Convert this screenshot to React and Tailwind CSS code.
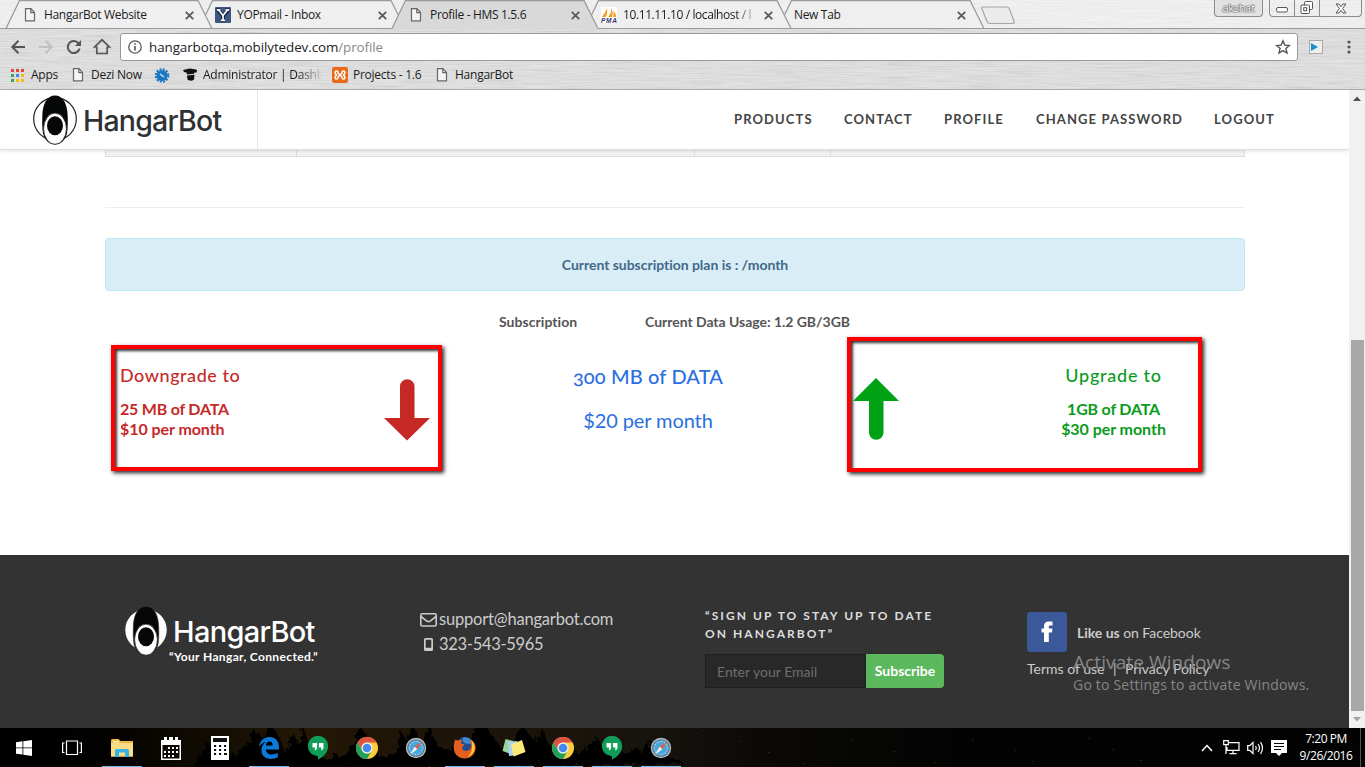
import React from "react";

const ui = "font-['Open_Sans','Noto_Sans',sans-serif]";

/* ---------- small drawings ---------- */

function Metal({ id, base, seed }) {
  return (
    <svg className="absolute inset-0 h-full w-full" aria-hidden="true">
      <filter id={id} x="0" y="0" width="100%" height="100%">
        <feTurbulence type="fractalNoise" baseFrequency="0.025 0.8" numOctaves="3" seed={seed} />
        <feColorMatrix values="1.4 0 0 0 0.05  1.4 0 0 0 0.05  1.4 0 0 0 0.05  0 0 0 0 0.16" />
      </filter>
      <rect width="100%" height="100%" fill={base} />
      <rect width="100%" height="100%" filter={`url(#${id})`} />
    </svg>
  );
}

function PageIcon() {
  return (
    <svg width="12" height="16" viewBox="0 0 12 16" fill="#f4f4f4" stroke="#666" strokeWidth="1.2" className="shrink-0">
      <path d="M1.5 1.6h5.4l3.6 3.9v8.4h-9z" />
      <path d="M6.8 1.6v4h3.7" fill="none" />
    </svg>
  );
}

function YopIcon() {
  return (
    <svg width="16" height="16" viewBox="0 0 16 16" className="shrink-0">
      <rect width="16" height="16" rx="1" fill="#3f5680" />
      <path d="M3 3l5 6 5-6M8 9v5M1.8 3h3.5M10.5 3H14M6 13.5h4" stroke="#111c38" strokeWidth="3.6" fill="none" />
      <path d="M3.600 3L8 8.600 12.400 3M8 8v5.500M2 2.800h3.400M10.600 2.800H14M6 13.300h4" stroke="#fff" strokeWidth="1.7" fill="none" />
    </svg>
  );
}

function PmaIcon() {
  return (
    <svg width="16" height="16" viewBox="0 0 16 16" className="shrink-0">
      <rect width="16" height="16" fill="#fff" />
      <path d="M6 1C5 4 3 7 1 10h4C6 7 6.500 4 6 1zM10 1c.8 4-1 7-3 9h4c1-3 .8-6-1-9zM12 4c1 2 .8 4 0 6h3c0-3-1-5-3-6z" fill="#f79a1c" />
      <text x="0" y="16" fontSize="6.500" fontWeight="bold" fontStyle="italic" fontFamily="Liberation Sans, sans-serif" fill="#33336e" textLength="16">PMA</text>
    </svg>
  );
}

function Tab({ icon, title, active, z, fade }) {
  return (
    <div className={`relative h-[29px] w-[193px] shrink-0 ${z}`}>
      <svg width="208" height="30" className="absolute left-0 top-0 overflow-visible">
        <path
          d={active ? "M-1 29.500L0 28.500 13.500.5H192L206 28.500l1 1z" : "M0 28.500L13.500.5H192L206 28.500z"}
          fill={active ? "#d9d9d9" : "#efefef"}
        />
        <path d="M0 28.500L13.500.5H192L206 28.500" fill="none" stroke="#9b9b9b" strokeWidth="1.3" />
        {!active && <path d="M0 28.500H206" stroke="#9b9b9b" />}
      </svg>
      <div className={`relative flex h-[30px] items-center pl-[17px] text-[12px] text-[#1c1c1c] ${ui}`}>
        {icon && <span className="mr-[7px] flex w-[14px] justify-center">{icon}</span>}
        <span className={`w-[136px] overflow-hidden whitespace-nowrap ${fade || "tracking-[-0.33px]"} ${icon ? "" : "-ml-px"}`}>{title}</span>
        <svg width="9" height="9" viewBox="0 0 9 9" className="absolute left-[179px] top-[11px]">
          <path d="M.8.8l7.400 7.400M8.200.8L.8 8.200" stroke="#5a5a5a" strokeWidth="1.8" />
        </svg>
      </div>
    </div>
  );
}

function Eye({ light }) {
  return (
    <svg width="44" height="50" viewBox="0 0 44 50" className="shrink-0">
      <circle cx="22" cy="24" r="21.300" fill="#fff" stroke={light ? "#333" : "#222"} strokeWidth="1.200" />
      <path
        d="M22 .5c8 0 12.500 8 12.700 21 .1 6 .3 10.500-.7 17-1.500 6.500-6 11-12 11s-10.500-4.500-12-11c-1-6.500-.8-11-.7-17C9.500 8.500 14 .5 22 .5z"
        fill="#060807" stroke={light ? "#333" : "none"} strokeWidth=".6"
      />
      <ellipse cx="22" cy="33.700" rx="11.400" ry="15.600" fill="#fff" stroke="#222" strokeWidth=".8" />
      <ellipse cx="22" cy="30.800" rx="8" ry="9.500" fill="#060807" />
    </svg>
  );
}

function Chrome() {
  return (
    <svg width="24" height="24" viewBox="0 0 24 24">
      <circle cx="12" cy="12" r="11" fill="#fbcd3b" />
      <path d="M2.470 6.500A11 11 0 0 1 21.530 6.500H12A5.500 5.500 0 0 0 7.240 14.750z" fill="#de5246" />
      <path d="M2.470 6.500A11 11 0 0 0 12 23l4.760-8.250A5.500 5.500 0 0 1 7.240 14.750z" fill="#1fa15d" />
      <circle cx="12" cy="12" r="5.500" fill="#f4f4f4" />
      <circle cx="12" cy="12" r="4.300" fill="#4688f1" />
    </svg>
  );
}

function Hangouts() {
  return (
    <svg width="22" height="25" viewBox="0 0 22 25">
      <path d="M11 .8a10.200 10.200 0 0 0 0 20.400V24.500c5.500-2.600 10.200-7.500 10.200-13.500A10.200 10.200 0 0 0 11 .8z" fill="#109d58" />
      <path d="M5.500 8h4.600v4.400c0 1.400-.8 2.400-2.200 3v-2.800H5.500zM11.900 8h4.600v4.400c0 1.400-.8 2.400-2.200 3v-2.800h-2.400z" fill="#fff" />
    </svg>
  );
}

function Compass() {
  return (
    <svg width="22" height="22" viewBox="0 0 22 22">
      <circle cx="11" cy="11" r="10.200" fill="#b9bcc0" />
      <circle cx="11" cy="11" r="8.800" fill="#596068" />
      <circle cx="11" cy="11" r="8" fill="#4ba4da" />
      <circle cx="11" cy="11" r="6.500" fill="none" stroke="#d8effb" strokeWidth="1.300" strokeDasharray=".7 1.850" />
      <path d="M17 4.500L12.300 12.300 9.700 9.700z" fill="#ec5a37" />
      <path d="M5 17.500l4.700-7.800 2.600 2.600z" fill="#f5f5f5" />
    </svg>
  );
}

function Folder() {
  return (
    <svg width="22" height="20" viewBox="0 0 22 20">
      <path d="M0 2.500C0 1.500.6 1 1.500 1h6l2 2H22v15.500H0z" fill="#eab946" />
      <path d="M2 3h6v1.500H2z" fill="#fff3c0" />
      <path d="M0 5h22v13.500H0z" fill="#fbdc84" />
      <path d="M4 19v-6.500q0-1.500 1.500-1.500h11q1.500 0 1.500 1.500V19h-4v-4.500H8V19z" fill="#35b4e8" />
    </svg>
  );
}

function Calendar() {
  return (
    <svg width="20" height="24" viewBox="0 0 20 24" fill="#fff">
      <path d="M0 4h3V1h3v3h2V1h4v3h2V1h3v3h3v20H0zM1.500 9v13.500h17V9z" fillRule="evenodd" />
      <path d="M7 11h2v2H7zM11 11h2v2h-2zM15 11h2v2h-2zM3 15h2v2H3zM7 15h2v2H7zM11 15h2v2h-2zM15 15h2v2h-2zM3 19h2v2H3zM7 19h2v2H7zM11 19h2v2h-2z" />
    </svg>
  );
}

function Calculator() {
  return (
    <svg width="18" height="24" viewBox="0 0 18 24">
      <rect width="18" height="24" fill="#fff" />
      <path d="M2 2h14v4H2zM3 9h3v2H3zM8 9h3v2H8zM13 9h3v2h-3zM3 13h3v2H3zM8 13h3v2H8zM13 13h3v2h-3zM3 17h3v2H3zM8 17h3v2H8zM13 17h3v2h-3z" fill="#111" />
      <path d="M5 9h1v2H5zM10 9h1v2h-1zM15 9h1v2h-1zM5 13h1v2H5zM10 13h1v2h-1zM15 13h1v2h-1zM5 17h1v2H5zM10 17h1v2h-1z" fill="#ddd" />
    </svg>
  );
}

function Edge() {
  return (
    <svg width="20" height="22" viewBox="0 0 20 22">
      <path d="M0 9.700C.7 4.300 4.700 0 10.300 0 16 0 20 4 20 9.800v2.600H6.800c.2 3 2.700 5 6 5 2.200 0 4.200-.6 6-1.700v4.600c-2 1.100-4.300 1.600-6.800 1.600-6 0-9.600-3.600-9.600-9 0-3.300 1.700-6.300 4.600-8C4.500 5.500 1.800 7 0 9.700zM6.900 8.500h6.800c0-2.600-1.200-3.900-3.300-3.900-1.900 0-3.200 1.400-3.500 3.900z" fill="#0b79d8" />
    </svg>
  );
}

function Firefox() {
  return (
    <svg width="23" height="23" viewBox="0 0 23 23">
      <circle cx="12" cy="11" r="10" fill="#244d8f" />
      <path d="M10 1.500c6-1 10 3 9.500 9-1-2-2-3-4-3-3 1-7-2-5.500-6z" fill="#3d8bd0" />
      <path d="M2 4c1-.5 2 0 2.500.8C6 4 8 3.800 9.500 4.600 8.500 5.400 8 6.300 8.200 7.500c.6.700 2 .6 3.300.8-.3 1.500-2 2-2.600 3.200.3 2.800 3 4 5.500 3.200 3-.8 4.400-4 3.600-7.200C17.600 5 17 4 16 3c4.500 1.500 7 5 6.600 9.500C22 18.500 17.500 22.500 12 22.500 5.500 22.500.8 18 .8 12 .8 9 1.300 6 2 4z" fill="#e55f20" />
      <path d="M18.500 4.500c3 3 4 6 2.800 10-1 3-3.500 5.300-6.800 6.200 4-3 5.800-8 4-16.200z" fill="#fbc93a" />
    </svg>
  );
}

function Notes() {
  return (
    <svg width="24" height="20" viewBox="0 0 24 20">
      <path d="M3.500 1l8 2-3 13-8-3z" fill="#9bd59a" />
      <path d="M6 4l9-1 1 14-9 1z" fill="#a9d4f5" />
      <path d="M9 6.500L20 2l3.500 12-12 4.500z" fill="#fce97c" />
    </svg>
  );
}

function StartLogo() {
  return (
    <svg width="16" height="16" viewBox="0 0 16 16" fill="#fff">
      <path d="M0 2.200l6.500-.9v6.200H0zM7.300 1.200L16 0v7.500H7.300zM0 8.300h6.500v6.300L0 13.700zM7.300 8.300H16V16l-8.700-1.200z" />
    </svg>
  );
}

function TaskView() {
  return (
    <svg width="20" height="16" viewBox="0 0 20 16" fill="none" stroke="#fff" strokeWidth="1.200">
      <path d="M4.500 1h11v13.500h-11zM2.500 3H.6v9.500h1.900M17.500 3h1.900v9.500h-1.900" />
    </svg>
  );
}

function TaskbarSky() {
  return (
    <svg width="1365" height="40" className="absolute inset-0">
      <defs>
        <linearGradient id="sky" x1="0" x2="1">
          <stop offset="0" stopColor="#000" />
          <stop offset=".08" stopColor="#030201" />
          <stop offset=".16" stopColor="#130d03" />
          <stop offset=".22" stopColor="#241805" />
          <stop offset=".3" stopColor="#1e1507" />
          <stop offset=".48" stopColor="#17130e" />
          <stop offset=".55" stopColor="#0c0a09" />
          <stop offset=".7" stopColor="#020302" />
        </linearGradient>
        <filter id="needles" x="-5%" y="-20%" width="110%" height="140%">
          <feTurbulence type="fractalNoise" baseFrequency="0.18" numOctaves="2" seed="7" />
          <feDisplacementMap in="SourceGraphic" scale="11" />
        </filter>
      </defs>
      <rect width="1365" height="40" fill="url(#sky)" />
      <g fill="#020201" filter="url(#needles)">
        <path d="M190 44l12-22 6-8 8 14 18-2 12-8 10-16 8 10 6-16 9 12 6 18 8-22 6 14 4-22 8 24 14 10 22-4 8-12 6-20 8 22 12 14 14-6 5-22 7 10 6-18 9 22 7-22 8 24 14 4 18-8 8-14 5-12 9 18 10 14 14-8 5-22 8 16 8 8 6-14 8 18 16 6 20-2 12-12 6 10 24 4 20-6 6-8 12 16 20 10z" />
      </g>
      {[702, 740, 768, 803, 851, 893, 934, 972, 1014, 1032, 1088, 1112, 1140].map((x, i) => (
        <rect key={x} x={x} y={(i * 11) % 34 + 2} width="2" height="1" fill="#20221f" />
      ))}
    </svg>
  );
}

/* ---------- browser frame ---------- */

function Browser() {
  return (
    <div className="relative h-[90px] w-full overflow-hidden border-b border-[#a9a9a9]">
      <Metal id="metal" base="#dcdcdc" seed="4" />
      <div className="relative flex h-[29px] border-b border-[#9b9b9b]">
        <div className="absolute inset-0 bg-white/50" />
        <div className="relative flex pl-[6px]">
          <Tab z="z-[4]" icon={<PageIcon />} title="HangarBot Website" />
          <Tab z="z-[3]" icon={<YopIcon />} title="YOPmail - Inbox" />
          <Tab z="z-[5]" icon={<PageIcon />} title="Profile - HMS 1.5.6" active />
          <Tab z="z-[2]" icon={<PmaIcon />} title="10.11.11.10 / localhost / l" fade="tracking-[-0.4px] [mask-image:linear-gradient(90deg,#000_112px,transparent_136px)]" />
          <Tab z="z-[1]" title="New Tab" />
        </div>
        <svg width="36" height="19" className="relative ml-[9px] mt-[6px] shrink-0">
          <path d="M2.500 1h24q2 0 3 2l4.500 12q.6 2.500-1.500 2.500H10q-2 0-3-2L2 3q-.8-2 .5-2z" fill="#ebebeb" stroke="#a6a6a6" strokeWidth="1.200" />
        </svg>
        <div className="relative ml-auto mr-[3px] flex">
          <div className="mr-[6px] flex h-[17px] w-[49px] items-center justify-center rounded-b-[4px] border border-t-0 border-[#8c8c8c] bg-[#e2e2e2] font-['Open_Sans',sans-serif] text-[11px] tracking-[-0.3px] text-[#fff] [text-shadow:0_0_1px_#444,0_0_1px_#444,0_0_2px_#555]">akshat</div>
          <div className="flex h-[17px] w-[93px] rounded-b-[4px] border border-t-0 border-[#8c8c8c] text-[#555]">
            <div className="flex w-[25px] items-center justify-center border-r border-[#8c8c8c]">
              <svg width="12" height="6" className="mt-[4px]"><rect x=".5" y=".5" width="11" height="4.500" rx="1.500" fill="#fff" stroke="#555" /></svg>
            </div>
            <div className="flex w-[25px] items-center justify-center border-r border-[#8c8c8c]">
              <svg width="14" height="14" fill="#fff" stroke="#555"><rect x="4.500" y=".5" width="8" height="8" rx="1" /><rect x="1" y="4" width="8.500" height="8.500" rx="1" /><rect x="3.700" y="6.700" width="3" height="3" /></svg>
            </div>
            <div className="flex flex-1 items-center justify-center">
              <svg width="12" height="11"><path d="M1 1h3l2 2.700L8 1h3L7.600 5.500 11 10H8L6 7.300 4 10H1l3.400-4.500z" fill="#fff" stroke="#555" /></svg>
            </div>
          </div>
        </div>
      </div>

      <div className="relative flex h-[36px] items-center pl-[10px]">
        <svg width="104" height="20" viewBox="0 0 104 20" fill="none" stroke="#555" strokeWidth="2" className="shrink-0">
          <path d="M15 10H2.500M8.500 3.800L2.300 10l6.200 6.200" />
          <path d="M29 10h12.500M35.500 3.800l6.200 6.200-6.200 6.200" stroke="#c0c0c0" />
          <path d="M68.800 6.700A6 6 0 1 0 69.600 11.500" />
          <path d="M71 3v6h-6z" fill="#555" stroke="none" />
          <path d="M86.500 9.800h-1.800L92 2.800l7.300 7h-1.800M86.800 9.500v7h10.400v-7" strokeWidth="1.700" />
        </svg>
        <div className={`ml-[6px] flex h-[28px] w-[1178px] items-center rounded-[3px] border border-[#999] bg-white pl-[7px] pr-[6px] text-[14px] ${ui}`}>
          <svg width="14" height="14" viewBox="0 0 14 14" fill="none" stroke="#555" strokeWidth="1.300"><circle cx="7" cy="7" r="6.200" /><path d="M7 6v4.500M7 3.300v1.500" strokeWidth="1.600" /></svg>
          <span className="ml-[7px] whitespace-nowrap text-[13.400px] tracking-[-0.08px] text-[#222]">hangarbotqa.mobilytedev.com<span className="text-[#888]">/profile</span></span>
          <svg width="16" height="16" viewBox="0 0 16 16" className="ml-auto"><path d="M8 1.800l1.800 4.300 4.600.4-3.500 3 1.100 4.500L8 11.600 4 14l1.100-4.500-3.500-3 4.600-.4z" fill="none" stroke="#555" strokeWidth="1.400" /></svg>
        </div>
        <svg width="14" height="14" className="ml-[11px]"><rect x=".5" y=".5" width="13" height="13" fill="#eee" stroke="#aaa" /><path d="M2 3l7 4-7 4z" fill="#1693c8" /></svg>
        <svg width="4" height="14" className="ml-[24px] fill-[#555]"><circle cx="2" cy="2" r="1.600" /><circle cx="2" cy="7" r="1.600" /><circle cx="2" cy="12" r="1.600" /></svg>
      </div>

      <div className={`relative flex h-[20px] items-center whitespace-nowrap pl-[11px] text-[12px] tracking-[-0.25px] text-[#1c1c1c] ${ui}`}>
        <svg width="13" height="13">
          {["#ea4335", "#ea4335", "#ea4335", "#34a853", "#4285f4", "#fbbc05", "#34a853", "#fbbc05", "#fbbc05"].map((c, i) => (
            <rect key={i} x={(i % 3) * 5} y={Math.floor(i / 3) * 5} width="3" height="3" fill={c} />
          ))}
        </svg>
        <span className="ml-[7px] w-[41px]">Apps</span>
        <PageIcon />
        <span className="ml-[7px] w-[63px]">Dezi Now</span>
        <svg width="16" height="16" viewBox="0 0 16 16">
          <circle cx="8" cy="8.500" r="6.300" fill="none" stroke="#1d76c0" strokeWidth="2" strokeDasharray="2 1.300" />
          <circle cx="8" cy="8.500" r="5.500" fill="#1d76c0" />
          <path d="M6 7l4 3" stroke="#cfe3f3" strokeWidth="1.500" />
        </svg>
        <svg width="15" height="14" viewBox="0 0 15 14" className="ml-[13px]" fill="#111"><path d="M0 2l7-1.500 7 1.200-.5 2.800-2.500.3v1L4 6.500 3.500 4.500 1 4zM4 7.500l7.500-.7-.5 4.700c-2 1.600-5 1.600-6.500 0z" /></svg>
        <span className="ml-[5px] w-[118px] overflow-hidden [mask-image:linear-gradient(90deg,#000_94px,transparent_120px)]">Administrator | Dashb</span>
        <svg width="16" height="16" viewBox="0 0 16 16" className="ml-[11px]">
          <rect width="16" height="16" rx="2" fill="#ea6a1c" />
          <path d="M5.500 5.500l5 5m0-5l-5 5M6 5.500c0-2-3-2-3 0 0 1 1 2 1.500 2.500C4 8.500 3 9.500 3 10.500c0 2 3 2 3 0M10 5.500c0-2 3-2 3 0 0 1-1 2-1.500 2.500.5.5 1.500 1.500 1.500 2.500 0 2-3 2-3 0" stroke="#fff" strokeWidth="1.500" fill="none" />
        </svg>
        <span className="ml-[5px] w-[83px]">Projects - 1.6</span>
        <PageIcon />
        <span className="ml-[7px]">HangarBot</span>
      </div>
    </div>
  );
}

/* ---------- page ---------- */

function Header() {
  return (
    <header className="relative z-10 flex h-[60px] shrink-0 border-b border-[#dedede] bg-white shadow-[0_1px_4px_rgba(0,0,0,0.12)]">
      <div className="flex w-[258px] items-center border-r border-[#e5e5e5] pl-[33px]">
        <Eye />
        <span className="ml-[6px] mt-[2px] font-['Inter',sans-serif] text-[28.500px] font-medium leading-[40px] tracking-[-0.8px] text-[#2f3235]">HangarBot</span>
      </div>
      <nav className="flex items-center whitespace-nowrap pl-[476px] font-['Lato',sans-serif] text-[13px] font-bold tracking-[1.1px] text-[#444]">
        <span className="w-[110px]">PRODUCTS</span>
        <span className="w-[100px]">CONTACT</span>
        <span className="w-[92px]">PROFILE</span>
        <span className="w-[178px]">CHANGE PASSWORD</span>
        <span>LOGOUT</span>
      </nav>
    </header>
  );
}

function Arrow({ fill, up }) {
  return (
    <svg width="46" height="62" viewBox="0 0 46 62" fill={fill}>
      {up ? <path d="M23 0L46 23H30.500V54.500a7.200 7.200 0 0 1-14.500 0V23H0z" /> : <path d="M23 61.500L46 39H30.500V7.500a7.200 7.200 0 0 0-14.500 0V39H0z" />}
    </svg>
  );
}

const boxShadow = "shadow-[2px_2px_4px_rgba(0,0,0,0.85),inset_2px_2px_3px_rgba(0,0,0,0.8)]";

function Main() {
  return (
    <main className="h-[405px] w-[1140px] shrink-0 ml-[105px] font-['Lato',sans-serif]">
      <div className="flex h-[7px] border border-t-0 border-[#ddd] bg-[#f3f3f3]">
        <div className="w-[191px] border-r border-[#ddd]" />
        <div className="w-[398px] border-r border-[#ddd]" />
        <div className="w-[136px] border-r border-[#ddd]" />
      </div>
      <div className="mt-[50px] h-px bg-[#eee]" />
      <div className="mt-[30px] flex h-[53px] items-center justify-center rounded-[4px] border border-[#bce8f1] bg-[#d9edf7] text-[14px] font-bold tracking-[-0.03px] text-[#41698a]">
        Current subscription plan is : /month
      </div>
      <div className="mt-[20px] flex h-[20px] items-center pl-[394px] text-[14px] font-bold tracking-[-0.03px] text-[#555]">
        <span className="w-[146px] tracking-[0.05px]">Subscription</span>
        <span>Current Data Usage: 1.2 GB/3GB</span>
      </div>
      <div className="mt-[6px] flex items-start">
        <section className={`ml-[6px] mt-[8px] flex h-[126px] w-[331px] border-[4px] border-[#fe0000] pl-[5px] pt-[13px] text-[#c52a29] ${boxShadow}`}>
          <div className="w-[264px]">
            <h3 className="h-[26px] text-[18px] font-medium leading-[26px] tracking-[0.55px]">Downgrade to</h3>
            <p className="mt-[11px] text-[16px] font-bold leading-[20px] tracking-[-0.06px]"><span className="tracking-[-0.22px]">25 MB of DATA</span><br />$10 per month</p>
          </div>
          <div className="mt-[17px]"><Arrow fill="#c52825" /></div>
        </section>
        <section className="mt-[25px] w-[405px] pl-[7px] text-center text-[#2a6fe0]">
          <h3 className="text-[20px] font-medium leading-[28px] tracking-[0.15px]"><span className="[font-feature-settings:'onum'_1]">300</span> MB of DATA</h3>
          <p className="mt-[16px] text-[20px] leading-[28px] tracking-[-0.1px]">$20 per month</p>
        </section>
        <section className={`flex h-[135px] w-[355px] border-[4px] border-[#fe0000] pl-[2px] text-[#0a9b1c] ${boxShadow}`}>
          <div className="mt-[37px] w-[46px]"><Arrow up fill="#00a113" /></div>
          <div className="ml-[136px] w-[157px] pt-[21px] text-center">
            <h3 className="h-[26px] text-[18px] font-medium leading-[26px] tracking-[0.75px]">Upgrade to</h3>
            <p className="mt-[11px] text-[16px] font-bold leading-[20px] tracking-[-0.05px]"><span className="tracking-[-0.2px]">1GB of DATA</span><br />$30 per month</p>
          </div>
        </section>
      </div>
    </main>
  );
}

function Footer() {
  return (
    <footer className="flex h-[173px] shrink-0 bg-[#333] font-['Lato',sans-serif] text-[#ccc]">
      <div className="ml-[124px] mt-[51px] w-[296px]">
        <div className="flex h-[50px] items-center">
          <Eye light />
          <span className="ml-[5px] mt-[2px] font-['Inter',sans-serif] text-[29px] font-medium leading-[40px] tracking-[-0.7px] text-white">HangarBot</span>
        </div>
        <div className="-mt-[7px] ml-[45px] whitespace-nowrap text-[12px] font-bold leading-[16px] tracking-[0.35px] text-white">“Your Hangar, Connected.”</div>
      </div>
      <div className="mt-[52px] w-[285px] text-[16.500px] leading-[25px] tracking-[-0.19px]">
        <div className="flex items-center">
          <svg width="17" height="14" viewBox="0 0 17 14" fill="none" stroke="#ccc" strokeWidth="1.600"><rect x=".8" y=".8" width="15.400" height="12.200" rx="1.500" /><path d="M1 3.500l5.500 4.300q2 1.500 4 0L16 3.500" /></svg>
          <span className="ml-[2px]">support@hangarbot.com</span>
        </div>
        <div className="flex items-center">
          <svg width="9" height="13" viewBox="0 0 9 13" className="ml-[4px]"><path fillRule="evenodd" d="M1.500 0h6Q9 0 9 1.500v10Q9 13 7.500 13h-6Q0 13 0 11.500v-10Q0 0 1.500 0zM1.700 1.800v8h5.600v-8z" fill="#ccc" /></svg>
          <span className="ml-[6px] tracking-[-0.3px]">323-543-5965</span>
        </div>
      </div>
      <div className="mt-[52px] w-[322px]">
        <div className="whitespace-nowrap text-[12px] font-bold leading-[18px] tracking-[2.05px] text-[#ddd]">“SIGN UP TO STAY UP TO DATE<br />ON HANGARBOT”</div>
        <div className="mt-[11px] flex h-[34px]">
          <div className="flex w-[161px] items-center border border-[#1f1f1f] bg-[#282828] pl-[11px] text-[14px] text-[#6e6e6e]">Enter your Email</div>
          <div className="flex w-[78px] items-center justify-center rounded-r-[4px] bg-[#5cb85c] pb-[2px] text-[14px] font-bold text-white">Subscribe</div>
        </div>
      </div>
      <div className="mt-[57px] text-[14px]">
        <div className="flex h-[40px] items-center">
          <svg width="40" height="40"><rect width="40" height="40" rx="3" fill="#3b5998" /><path d="M17 30V20.500h-2.500v-4H17V14c0-3 1.700-4.500 4.700-4.500h3.800v4h-2.200c-1.200 0-1.500.5-1.500 1.500v1.500h3.600l-.4 4h-3.200V30z" fill="#fff" /></svg>
          <span className="ml-[10px] tracking-[-0.04px]"><b>Like us</b> on Facebook</span>
        </div>
        <div className="mt-[7px] flex leading-[20px]"><span className="w-[86px]">Terms of use</span><span className="w-[12px]">|</span><span>Privacy Policy</span></div>
      </div>
    </footer>
  );
}

function Taskbar() {
  const apps = [
    [Folder, true], [Calendar, false], [Calculator, false], [Edge, true], [Hangouts, false], [Chrome, false],
    [Compass, false], [Firefox, true], [Notes, true], [Chrome, true], [Hangouts, true], [Compass, true],
  ];
  return (
    <div className="relative flex h-[39px] w-full bg-black">
      <TaskbarSky />
      <div className="relative flex w-[48px] items-center justify-center"><StartLogo /></div>
      <div className="relative flex w-[49px] items-center justify-center pr-[2px]"><TaskView /></div>
      {apps.map(([Icon, open], i) => (
        <div key={i} className="relative flex w-[49px] flex-col items-center">
          <div className="flex h-[38px] items-center pt-px"><Icon /></div>
          {open && <div className="h-px w-[40px] bg-[#7fb4e6]" />}
        </div>
      ))}
      <div className="relative ml-auto flex items-center">
        <svg width="12" height="8" fill="none" stroke="#fff" strokeWidth="1.500"><path d="M1 7l5-5.500L11 7" /></svg>
        <svg width="17" height="15" viewBox="0 0 17 15" fill="none" stroke="#fff" strokeWidth="1.200" className="ml-[10px]"><path d="M6 2.600h10v7.800H4V7M10 10.500v3M6.500 13.600h7M.7.7h4.600v4H.7zM3 5v9" /></svg>
        <svg width="17" height="14" viewBox="0 0 17 14" fill="none" stroke="#fff" strokeWidth="1.200" className="ml-[7px]"><path d="M.7 4.700h2L6 1.500v11L2.700 9.300h-2zM8.500 5q1.500 2 0 4M11 3q3 4 0 8M13.500 1.200q4 5.800 0 11.600" /></svg>
        <svg width="16" height="16" viewBox="0 0 16 16" className="ml-[7px]"><path d="M0 0h16v13h-5l-3 3-3-3H0z" fill="#fff" /><path d="M3 3.500h10M3 6.500h10M3 9.500h7" stroke="#000" strokeWidth="1.100" /></svg>
        <div className={`ml-[11px] w-[56px] whitespace-nowrap pb-[2px] text-center text-[12px] leading-[17px] tracking-[-0.45px] text-white ${ui}`}>7:20 PM<br />9/26/2016</div>
        <div className="ml-[6px] h-[39px] w-[5px] border-l border-[#555]" />
      </div>
    </div>
  );
}

export default function App() {
  return (
    <div className="relative flex h-[767px] w-[1365px] flex-col overflow-hidden bg-white">
      <Browser />
      <div className="flex h-[638px]">
        <div className="flex w-[1349px] flex-col overflow-hidden">
          <Header />
          <Main />
          <Footer />
        </div>
        <div className="flex w-[16px] flex-col items-center bg-[#f1f1f1]">
          <svg width="8" height="5" className="mt-[6px]"><path d="M0 5l4-4.500L8 5z" fill="#505050" /></svg>
          <div className="mt-[239px] h-[371px] w-[13px] bg-[#a8a8a8]" />
          <svg width="8" height="5" className="mt-[6px]"><path d="M0 0h8L4 4.500z" fill="#a3a3a3" /></svg>
        </div>
      </div>
      <Taskbar />
      <div className={`absolute left-[1073px] top-[650px] whitespace-nowrap text-[#868686] ${ui}`}>
        <div className="text-[19px] leading-[24px] tracking-[0.1px]">Activate Windows</div>
        <div className="text-[14px] leading-[21px] tracking-[0.2px]">Go to Settings to activate Windows.</div>
      </div>
    </div>
  );
}
